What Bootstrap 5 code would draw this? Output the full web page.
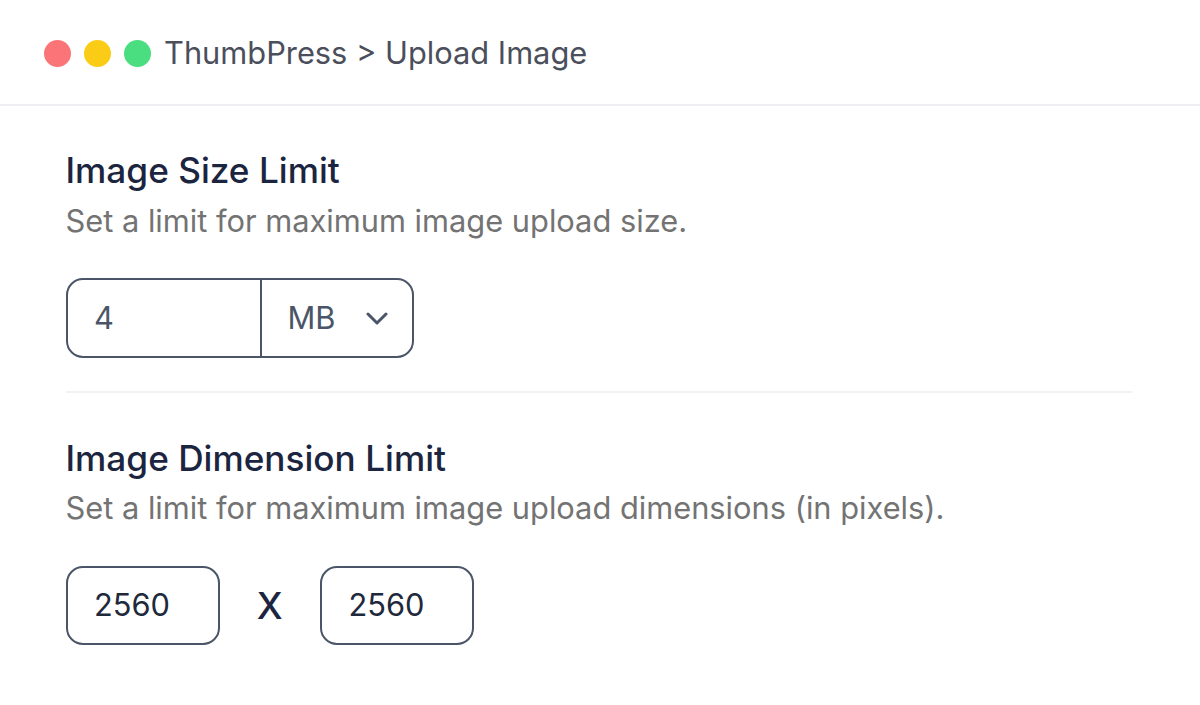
<!DOCTYPE html>
<html lang="en"><head><meta charset="utf-8">
<link href="https://cdn.jsdelivr.net/npm/bootstrap@5.3.0/dist/css/bootstrap.min.css" rel="stylesheet">
<style>
html,body{height:705px;overflow:hidden;background:#fff;}
body{font-family:Inter,"Liberation Sans",sans-serif;color:#4a5568;}
.topbar{height:106px;padding-left:44px;padding-top:2px;border-bottom:2px solid #eeeff3;gap:13px;}
.dot{width:27px;height:27px;border-radius:50%;}
.dot-r{background:#fb7578;}.dot-y{background:#facc15;}.dot-g{background:#4ade80;}
.crumb{font-size:30.8px;color:#4b4f5c;line-height:36px;}
.pane{padding:0 68px 0 65.5px;}
.sect-a{padding-top:43px;padding-bottom:33px;border-bottom:2px solid #f1f2f6;}
.sect-b{padding-top:44px;}
.hd{font-size:35.2px;font-weight:500;color:#1c2540;line-height:42px;margin:0;}
.sub{font-size:30.8px;color:#737373;line-height:36px;margin:12px 0 0;}
.sect-b .sub{margin-top:11px;}
.field-row{margin-top:39px;}
.field-row-b{margin-top:40px;}
.combo{width:348.5px;height:80px;border:2px solid #4a5568;border-radius:17px;font-size:30.8px;}
.combo-l{width:194px;border-right:2px solid #4a5568;padding-left:26.5px;}
.combo-r{flex:1;padding:0 24px 0 26px;}
.numbox{width:154px;height:79px;border:2px solid #4a5568;border-radius:17px;font-size:30.8px;padding-left:26.5px;color:#1e293b;}
.times{font-size:37px;font-weight:500;color:#1c2540;width:100.5px;text-align:center;line-height:1;}
</style></head>
<body>
<header class="topbar d-flex align-items-center">
<span class="dot dot-r"></span><span class="dot dot-y"></span><span class="dot dot-g"></span>
<span class="crumb">ThumbPress &gt; Upload Image</span>
</header>
<main class="pane">
<section class="sect-a">
<h2 class="hd">Image Size Limit</h2>
<p class="sub">Set a limit for maximum image upload size.</p>
<div class="combo field-row d-flex align-items-stretch">
<div class="combo-l d-flex align-items-center">4</div>
<div class="combo-r d-flex align-items-center justify-content-between">MB
<svg width="22" height="13" viewBox="0 0 22 13" fill="none" stroke="#4a5568" stroke-width="3" stroke-linecap="round" stroke-linejoin="round"><path d="M2 2l9 9 9-9"/></svg>
</div></div>
</section>
<section class="sect-b">
<h2 class="hd">Image Dimension Limit</h2>
<p class="sub">Set a limit for maximum image upload dimensions (in pixels).</p>
<div class="field-row-b d-flex align-items-center">
<div class="numbox d-flex align-items-center">2560</div>
<div class="times">X</div>
<div class="numbox d-flex align-items-center">2560</div>
</div>
</section>
</main>
<script src="https://cdn.jsdelivr.net/npm/bootstrap@5.3.0/dist/js/bootstrap.bundle.min.js"></script>
</body></html>
